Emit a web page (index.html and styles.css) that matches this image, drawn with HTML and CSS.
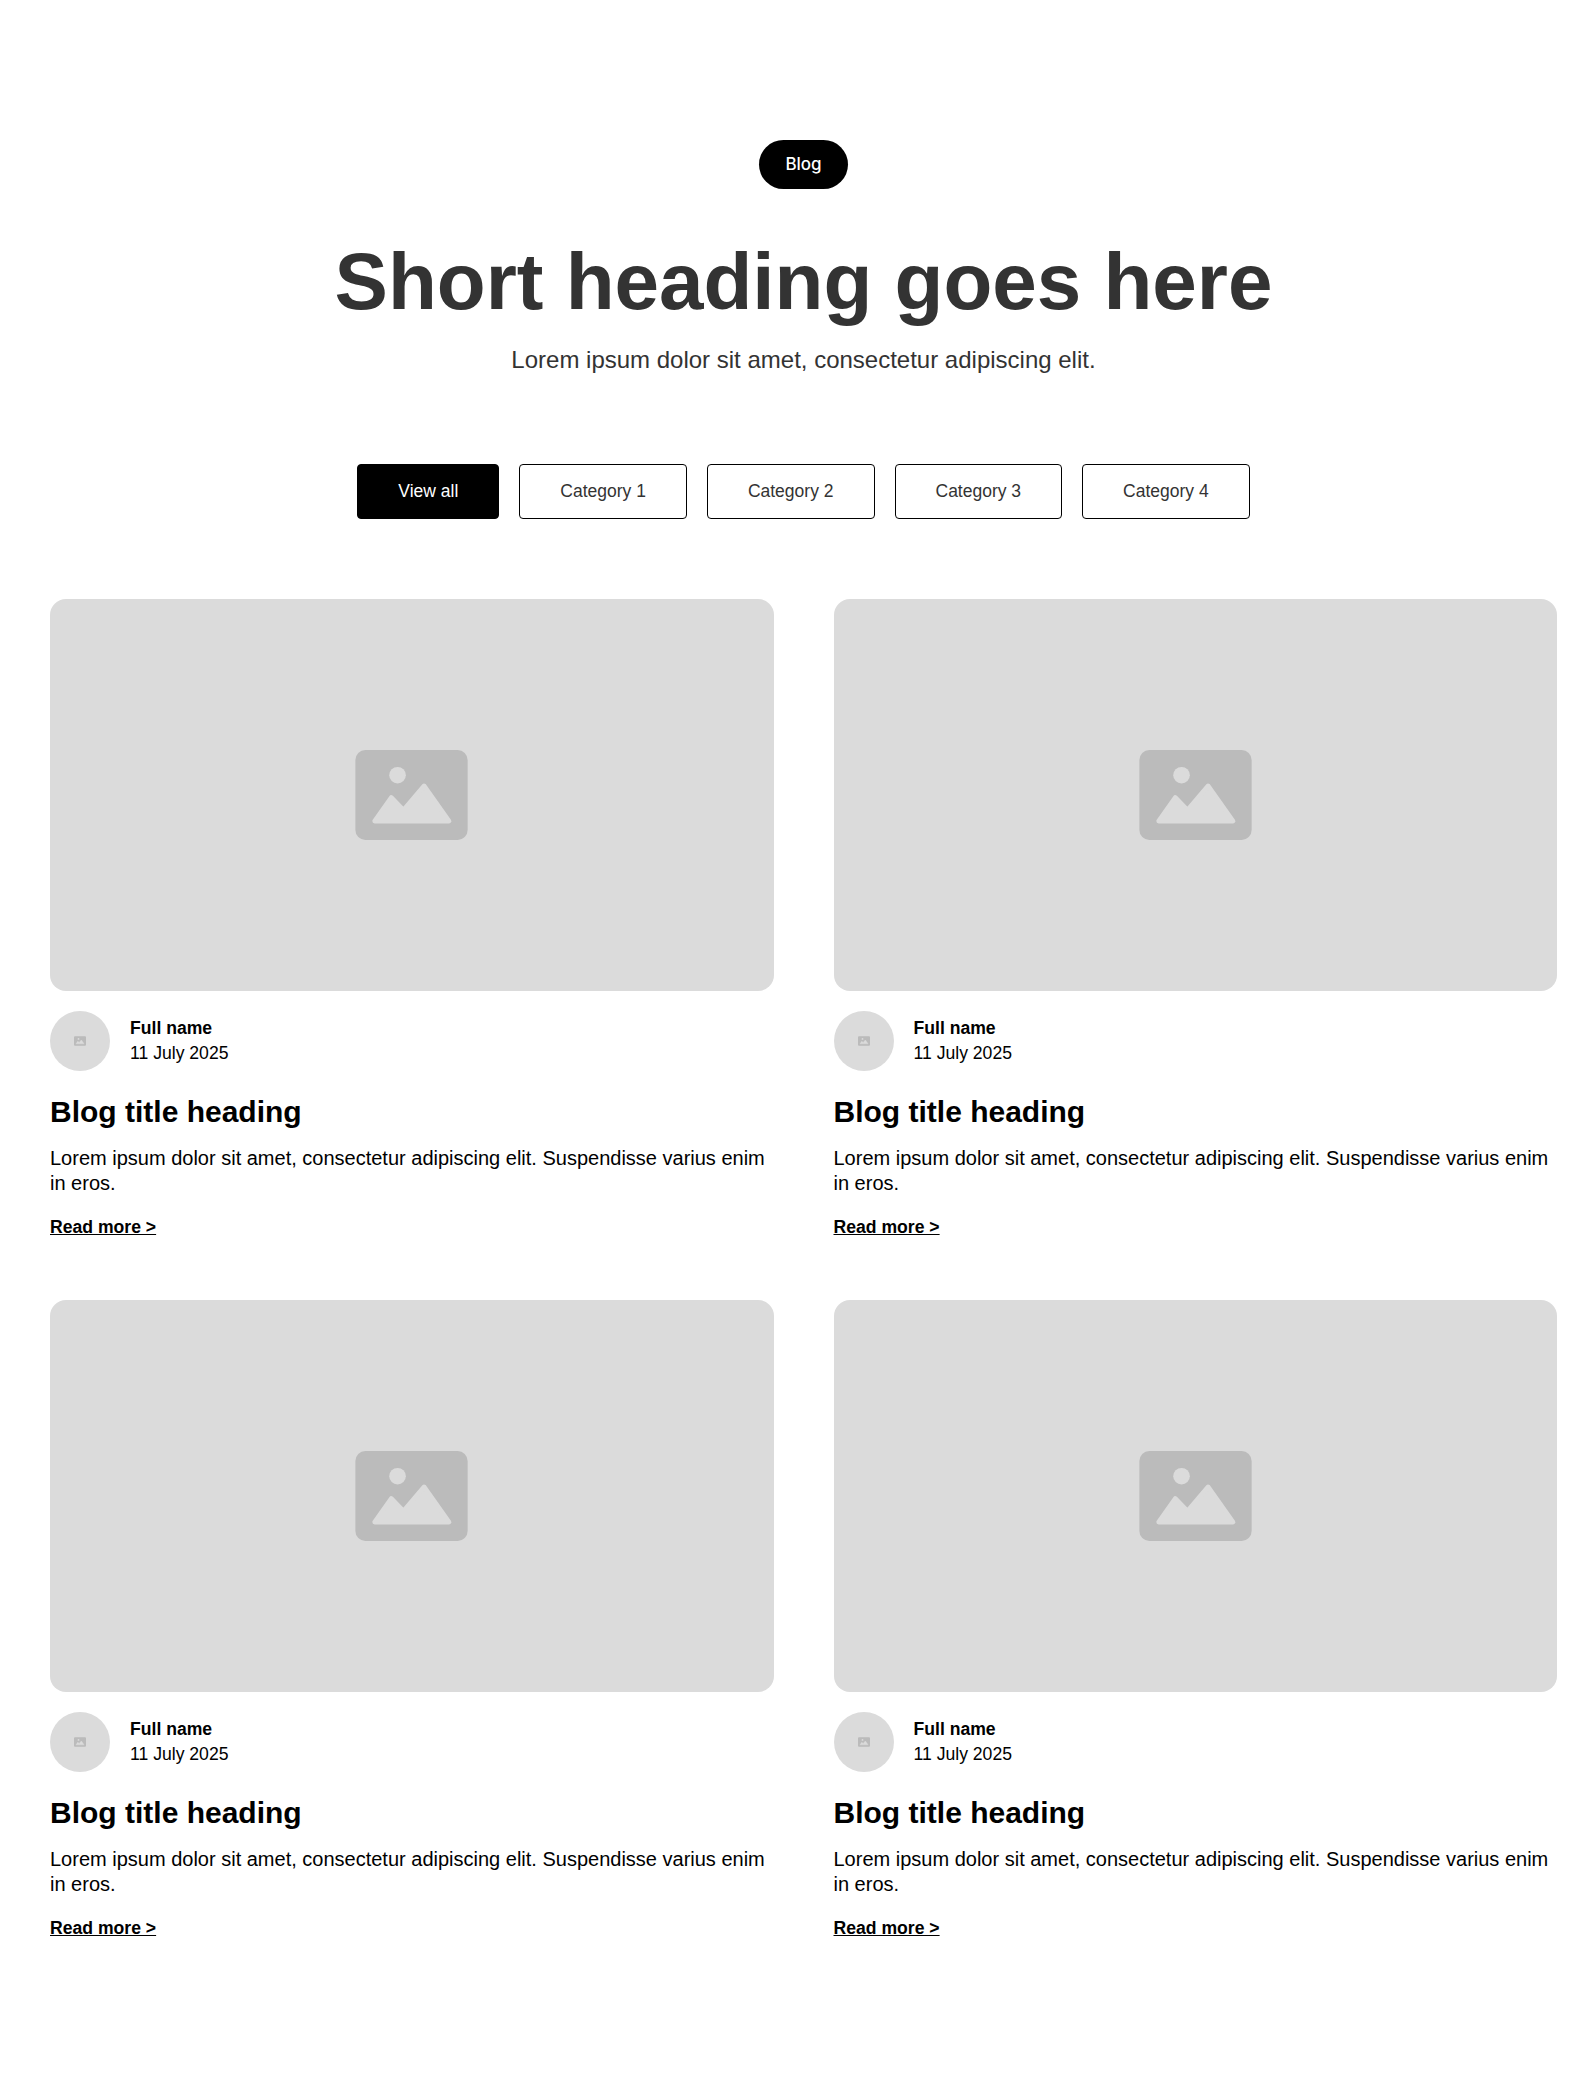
FILE: index.html
```html
<!DOCTYPE html>
<html lang="en">
  <head>
    <meta charset="UTF-8" />
    <meta name="viewport" content="width=device-width, initial-scale=1.0" />
    <title>Blog</title>

    <link rel="stylesheet" href="styles.css">
  </head>
  <body>
    <svg class="icon-defs" aria-hidden="true">
      <symbol id="placeholder" viewBox="0 0 338 271">
        <rect width="338" height="271" rx="30" fill="#bbbbbb" />
        <circle cx="127" cy="76" r="25" fill="#dbdbdb" />
        <polygon
          points="58,214 108,143 145,181 207,108 282,214"
          fill="#dbdbdb"
          stroke="#dbdbdb"
          stroke-width="14"
          stroke-linejoin="round"
        />
      </symbol>
    </svg>

    <section id="blog">
      <header class="intro">
        <span class="tag">Blog</span>
        <h1>Short heading goes here</h1>
        <p class="lead">Lorem ipsum dolor sit amet, consectetur adipiscing elit.</p>
      </header>

      <nav class="filters">
        <a class="filter active" href="#">View all</a>
        <a class="filter" href="#">Category 1</a>
        <a class="filter" href="#">Category 2</a>
        <a class="filter" href="#">Category 3</a>
        <a class="filter" href="#">Category 4</a>
      </nav>

      <div class="posts">
        <article class="post">
          <div class="cover"><svg class="cover-icon"><use href="#placeholder" /></svg></div>
          <div class="author">
            <div class="avatar"><svg class="avatar-icon"><use href="#placeholder" /></svg></div>
            <div>
              <div class="author-name">Full name</div>
              <div class="post-date">11 July 2025</div>
            </div>
          </div>
          <h2>Blog title heading</h2>
          <p class="excerpt">Lorem ipsum dolor sit amet, consectetur adipiscing elit. Suspendisse varius enim in eros.</p>
          <a class="read-more" href="#">Read more &gt;</a>
        </article>

        <article class="post">
          <div class="cover"><svg class="cover-icon"><use href="#placeholder" /></svg></div>
          <div class="author">
            <div class="avatar"><svg class="avatar-icon"><use href="#placeholder" /></svg></div>
            <div>
              <div class="author-name">Full name</div>
              <div class="post-date">11 July 2025</div>
            </div>
          </div>
          <h2>Blog title heading</h2>
          <p class="excerpt">Lorem ipsum dolor sit amet, consectetur adipiscing elit. Suspendisse varius enim in eros.</p>
          <a class="read-more" href="#">Read more &gt;</a>
        </article>

        <article class="post">
          <div class="cover"><svg class="cover-icon"><use href="#placeholder" /></svg></div>
          <div class="author">
            <div class="avatar"><svg class="avatar-icon"><use href="#placeholder" /></svg></div>
            <div>
              <div class="author-name">Full name</div>
              <div class="post-date">11 July 2025</div>
            </div>
          </div>
          <h2>Blog title heading</h2>
          <p class="excerpt">Lorem ipsum dolor sit amet, consectetur adipiscing elit. Suspendisse varius enim in eros.</p>
          <a class="read-more" href="#">Read more &gt;</a>
        </article>

        <article class="post">
          <div class="cover"><svg class="cover-icon"><use href="#placeholder" /></svg></div>
          <div class="author">
            <div class="avatar"><svg class="avatar-icon"><use href="#placeholder" /></svg></div>
            <div>
              <div class="author-name">Full name</div>
              <div class="post-date">11 July 2025</div>
            </div>
          </div>
          <h2>Blog title heading</h2>
          <p class="excerpt">Lorem ipsum dolor sit amet, consectetur adipiscing elit. Suspendisse varius enim in eros.</p>
          <a class="read-more" href="#">Read more &gt;</a>
        </article>
      </div>
    </section>
  </body>
</html>
```

FILE: styles.css
```css
body {
  font-family: "Liberation Sans", Arial, sans-serif;
  margin: 0;
  background-color: #fff;
  color: #000;
}

.icon-defs {
  display: none;
}

#blog {
  padding: 140px 31px 120px 50px;
}

.intro {
  text-align: center;
}

.tag {
  display: inline-block;
  padding: 12px 26.5px;
  border-radius: 25px;
  background-color: #000;
  color: #fff;
  font-family: Inter, sans-serif;
  font-size: 17px;
  font-weight: 500;
  line-height: 25px;
}

h1 {
  margin: 45px 0 13px;
  font-size: 80px;
  line-height: 1.2;
  color: #333;
}

.lead {
  margin: 0;
  font-size: 24px;
  line-height: 1.4;
  color: #333;
}

.filters {
  display: flex;
  justify-content: center;
  gap: 20px;
  margin-top: 87px;
}

.filter {
  padding: 15px 40px;
  border: 1px solid #000;
  border-radius: 4px;
  font-size: 17.5px;
  line-height: 23px;
  color: #333;
  text-decoration: none;
}

.filter.active {
  background-color: #000;
  color: #fff;
}

.posts {
  display: grid;
  grid-template-columns: 1fr 1fr;
  gap: 62px 60px;
  margin-top: 80px;
}

.cover {
  display: flex;
  justify-content: center;
  align-items: center;
  height: 392px;
  border-radius: 16px;
  background-color: #dbdbdb;
}

.cover-icon {
  width: 113px;
  height: 90px;
}

.author {
  display: flex;
  align-items: center;
  gap: 20px;
  margin-top: 20px;
}

.avatar {
  display: flex;
  justify-content: center;
  align-items: center;
  width: 60px;
  height: 60px;
  border-radius: 50%;
  background-color: #dbdbdb;
}

.avatar-icon {
  width: 12px;
  height: 10px;
}

.author-name {
  font-size: 17.6px;
  font-weight: 700;
  line-height: 25px;
}

.post-date {
  font-size: 17.6px;
  line-height: 25px;
}

h2 {
  margin: 23px 0 16px;
  font-size: 30px;
  line-height: 36px;
}

.excerpt {
  margin: 0 0 21px;
  font-size: 20px;
  line-height: 25px;
}

.read-more {
  font-size: 17.6px;
  font-weight: 700;
  color: #000;
}
```
